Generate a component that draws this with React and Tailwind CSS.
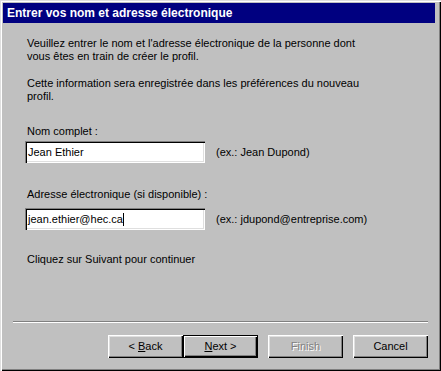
import React from 'react';

const font = { fontFamily: '"Liberation Sans", Arial, sans-serif' };

const Btn = ({ children, isDefault, disabled }) => (
  <button
    className={`w-[75px] h-[23px] bg-[#c0c0c0] text-[11px] flex items-center justify-center ${
      isDefault
        ? 'shadow-[inset_0_0_0_1px_#000,inset_1px_1px_0_1px_#fff,inset_-1px_-1px_0_1px_#000,inset_-2px_-2px_0_1px_#808080]'
        : 'shadow-[inset_1px_1px_0_#fff,inset_-1px_-1px_0_#000,inset_-2px_-2px_0_#808080,inset_2px_2px_0_#dfdfdf]'
    } ${disabled ? 'text-[#808080] [text-shadow:1px_1px_0_#fff]' : 'text-black'}`}
  >
    <span>{children}</span>
  </button>
);

const Field = ({ value, caret }) => (
  <div className="w-[180px] h-[22px] bg-white flex items-center pl-[3px] text-[11px] text-black shadow-[inset_1px_1px_0_#808080,inset_2px_2px_0_#000,inset_-1px_-1px_0_#fff,inset_-2px_-2px_0_#dfdfdf]">
    <span>{value}</span>
    {caret && <span className="w-px h-[13px] bg-black" />}
  </div>
);

export default function App() {
  return (
    <div
      className="w-[441px] h-[371px] bg-[#c0c0c0] p-[3px] flex flex-col shadow-[inset_1px_1px_0_#dfdfdf,inset_2px_2px_0_#fff,inset_-1px_-1px_0_#000,inset_-2px_-2px_0_#808080]"
      style={font}
    >
      <div className="h-[20px] bg-[#000080] text-white font-bold text-[12px] flex items-center pl-[4px] mr-[3px]">
        Entrer vos nom et adresse électronique
      </div>

      <div className="flex flex-col pl-[24px] text-[11px] leading-[13px] text-black">
        <p className="mt-[14px]">
          Veuillez entrer le nom et l'adresse électronique de la personne dont
          <br />
          vous êtes en train de créer le profil.
        </p>
        <p className="mt-[14px]">
          Cette information sera enregistrée dans les préférences du nouveau
          <br />
          profil.
        </p>
        <div className="mt-[22px]">Nom complet :</div>
        <div className="mt-[3px] -ml-[2px] flex items-center gap-[11px]">
          <Field value="Jean Ethier" />
          <span>(ex.: Jean Dupond)</span>
        </div>
        <div className="mt-[25px]">Adresse électronique (si disponible) :</div>
        <div className="mt-[7px] -ml-[2px] flex items-center gap-[11px]">
          <Field value="jean.ethier@hec.ca" caret />
          <span>(ex.: jdupond@entreprise.com)</span>
        </div>
        <div className="mt-[23px]">Cliquez sur Suivant pour continuer</div>
      </div>

      <div className="flex-1" />

      <div className="mx-[10px] h-[2px] border-t border-t-[#808080] border-b border-b-white" />

      <div className="flex justify-end mt-[12px] mb-[10px] mr-[10px]">
        <Btn>
          {'< '}
          <span className="underline">B</span>ack
        </Btn>
        <Btn isDefault>
          <span className="underline">N</span>
          {'ext >'}
        </Btn>
        <div className="w-[10px]" />
        <Btn disabled>Finish</Btn>
        <div className="w-[10px]" />
        <Btn>Cancel</Btn>
      </div>
    </div>
  );
}
